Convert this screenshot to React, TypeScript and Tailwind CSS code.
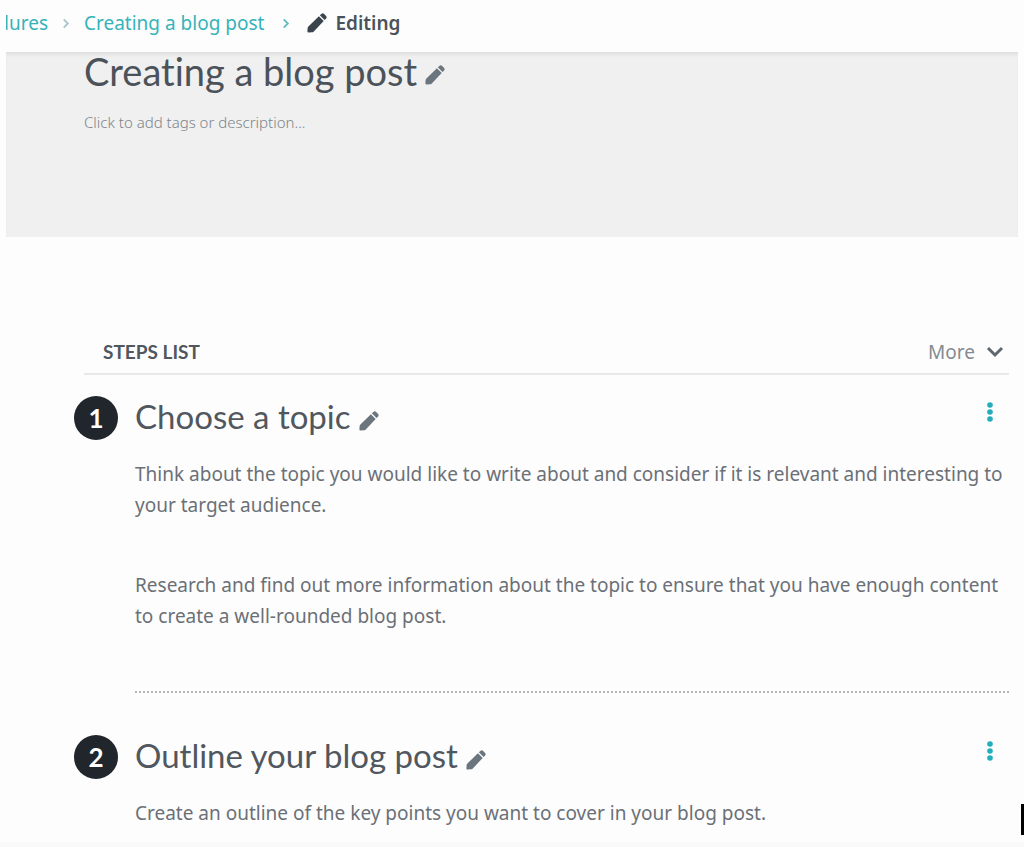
type Step = {
  title: string;
  paragraphs: string[];
};

const steps: Step[] = [
  {
    title: "Choose a topic",
    paragraphs: [
      "Think about the topic you would like to write about and consider if it is relevant and interesting to your target audience.",
      "Research and find out more information about the topic to ensure that you have enough content to create a well-rounded blog post."
    ]
  },
  {
    title: "Outline your blog post",
    paragraphs: ["Create an outline of the key points you want to cover in your blog post."]
  }
];

function Chevron({ className }: { className: string }) {
  return (
    <svg viewBox="0 0 8 12" className={className} fill="none" stroke="currentColor" strokeWidth="2" aria-hidden="true">
      <path d="M1.5 1.5 6 6l-4.5 4.5" />
    </svg>
  );
}

function Pencil({ className }: { className: string }) {
  return (
    <svg viewBox="0 0 20 20" className={className} fill="currentColor" aria-hidden="true">
      <path d="M11.9 3.2 16.7 8 6.8 18.4Q6 19.2 4.8 19.3L1.8 19.6Q.3 19.7.4 18.2L.6 15.2Q.7 14.3 1.4 13.6Z" />
      <path d="M12.8 2.3 14.4.9Q15.8-.2 17.2 1L19.1 2.9Q20.2 4.3 19.1 5.6L17.6 7.1Z" />
    </svg>
  );
}

function Breadcrumbs() {
  return (
    <nav aria-label="Breadcrumb" className="mx-[6px] flex h-[52px] items-center pb-[6px] text-[19px] leading-6">
      <div className="flex w-[42px] justify-end overflow-hidden">
        <a href="#" className="text-[#36b3b9]">dures</a>
      </div>
      <Chevron className="mx-[14px] h-[11px] w-2 text-[#a9c5c9]" />
      <a href="#" className="text-[#36b3b9]">Creating a blog post</a>
      <Chevron className="mr-[17px] ml-[18px] h-[11px] w-2 text-[#62bcc3]" />
      <Pencil className="mr-2 h-5 w-5 text-[#3b444c]" />
      <span className="font-semibold text-[#4a525a]">Editing</span>
    </nav>
  );
}

function EditButton({ label }: { label: string }) {
  return (
    <button type="button" aria-label={label} className="mt-[6px] ml-2 text-[#6b757e]">
      <Pencil className="h-5 w-5" />
    </button>
  );
}

function StepItem({ step, number }: { step: Step; number: number }) {
  return (
    <li className="flex items-start">
      <div className="mr-[17px] -ml-[10px] flex h-11 w-11 shrink-0 items-center justify-center rounded-full bg-[#20262b] font-[Lato] text-[26px] font-bold text-white">
        {number}
      </div>
      <div className="min-w-0 flex-1">
        <div className="flex h-11 items-center">
          <h3 className="self-start font-[Lato] text-[33px] leading-10 text-[#50575e]">{step.title}</h3>
          <EditButton label={`Edit ${step.title}`} />
          <button type="button" aria-label={`Options for ${step.title}`} className="mr-4 mb-3 ml-auto text-[#22aebb]">
            <svg viewBox="0 0 6 20" className="h-5 w-[6px]" fill="currentColor">
              <circle cx="3" cy="3" r="2.8" />
              <circle cx="3" cy="10" r="2.8" />
              <circle cx="3" cy="17" r="2.8" />
            </svg>
          </button>
        </div>
        <div className="mt-[19px] space-y-[49px] text-[19px] leading-[31px] text-[#6b7077]">
          {step.paragraphs.map((paragraph) => (
            <p key={paragraph}>{paragraph}</p>
          ))}
        </div>
        {number < steps.length && <hr className="mt-[59px] mb-[42px] border-t-2 border-dotted border-[#b4b7ba]" />}
      </div>
    </li>
  );
}

export default function App() {
  return (
    <div className="relative min-h-screen overflow-hidden bg-[#fdfdfd] font-['Noto_Sans',sans-serif]">
      <Breadcrumbs />

      {/* Title banner */}
      <header className="mx-[6px] bg-[#f0f0f0] pb-[103px] pl-[78px] shadow-[inset_0_5px_5px_-3px_#dcdcdc]">
        <div className="flex h-10 items-center">
          <h1 className="self-start font-[Lato] text-[38px] leading-[38px] text-[#4b5259] [font-variant-ligatures:none]">
            Creating a blog post
          </h1>
          <EditButton label="Edit title" />
        </div>
        <button type="button" className="mt-[18px] block text-[15px] leading-6 font-light text-[#7d858b]">
          Click to add tags or description...
        </button>
      </header>

      {/* Steps */}
      <main className="mr-[15px] ml-[84px] pt-[94px]">
        <div className="flex h-11 items-center justify-between border-b-2 border-[#e8e9e9] pl-[19px]">
          <h2 className="font-[Lato] text-[19px] font-bold text-[#50575e]">STEPS LIST</h2>
          <button type="button" className="mr-[5px] flex items-center gap-[11px] text-[19px] text-[#858b90]">
            More
            <svg viewBox="0 0 18 12" className="h-3 w-[18px]" fill="none" stroke="#60686f" strokeWidth="3" aria-hidden="true">
              <path d="m2 2 7 7 7-7" />
            </svg>
          </button>
        </div>
        <ol className="pt-[21px]">
          {steps.map((step, index) => (
            <StepItem key={step.title} step={step} number={index + 1} />
          ))}
        </ol>
      </main>

      <div className="absolute right-0 bottom-0 left-0 h-[5px] bg-[#f9f9f9]" />
      <div className="absolute right-0 bottom-3 h-[31px] w-[3px] bg-black" />
    </div>
  );
}
